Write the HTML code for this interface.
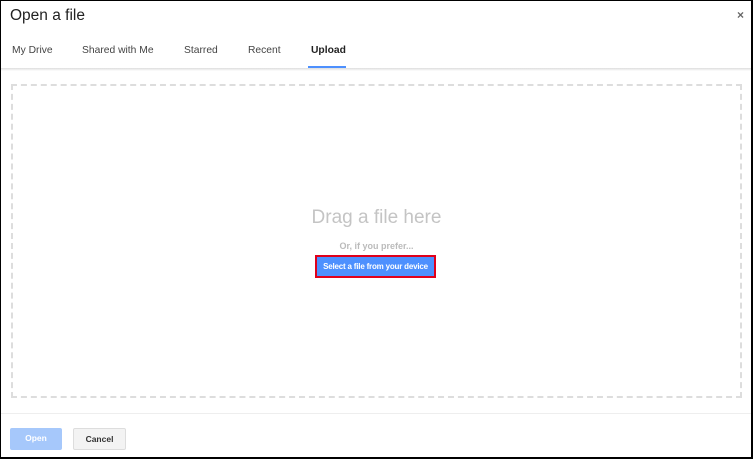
<!DOCTYPE html>
<html><head><style>
*{margin:0;padding:0;box-sizing:border-box}
body{width:753px;height:459px;background:#fff;font-family:"Liberation Sans",Arial,sans-serif;position:relative;overflow:hidden}
.frame{position:absolute;left:0;top:0;width:753px;height:459px;border:1px solid #000;border-right-width:2px;border-bottom-width:2px}
.title{position:absolute;left:10px;top:7px;font-size:15.5px;color:#222}
.x{position:absolute;left:737px;top:8px;font-size:12px;color:#666;font-weight:bold}
.tab{position:absolute;top:45px;font-size:10.3px;color:#444;white-space:nowrap}
.hdr{position:absolute;left:1px;top:68px;width:750px;height:3px;background:linear-gradient(#ddd,#fff)}
.ul{position:absolute;left:308px;top:66px;width:38px;height:2px;background:#4d90fe}
.drop{position:absolute;left:11px;top:84px;width:731px;height:314px;border:2.5px dashed #ddd}
.drag{position:absolute;left:0;width:753px;text-align:center;top:207px;font-size:19px;color:#c4c4c4}
.or{position:absolute;left:0;width:753px;text-align:center;top:241px;font-size:9px;color:#bbb;font-weight:bold}
.sel{position:absolute;left:315px;top:255px;width:121px;height:23px;border:2px solid #e0001b;background:#4d90fe;color:#fff;font-size:8px;font-weight:bold;text-align:center;line-height:19px;white-space:nowrap;letter-spacing:-0.2px}
.foot{position:absolute;left:1px;top:413px;width:750px;height:1px;background:#eee}
.b{position:absolute;top:428px;height:22px;font-size:8.5px;font-weight:bold;text-align:center;line-height:21px;border-radius:2px}
</style></head><body>
<div class="title">Open a file</div>
<div class="x">×</div>
<div class="tab" style="left:12px">My Drive</div>
<div class="tab" style="left:82px">Shared with Me</div>
<div class="tab" style="left:184px">Starred</div>
<div class="tab" style="left:248px">Recent</div>
<div class="tab" style="left:311px;font-weight:bold;color:#222">Upload</div>
<div class="ul"></div>
<div class="hdr"></div>
<div class="drop"></div>
<div class="drag">Drag a file here</div>
<div class="or">Or, if you prefer...</div>
<div class="sel">Select a file from your device</div>
<div class="foot"></div>
<div class="b" style="left:10px;width:52px;background:#a6c8fb;color:#fff">Open</div>
<div class="b" style="left:73px;width:53px;background:#f3f3f3;border:1px solid #ddd;color:#333">Cancel</div>
<div class="frame"></div>
</body></html>
